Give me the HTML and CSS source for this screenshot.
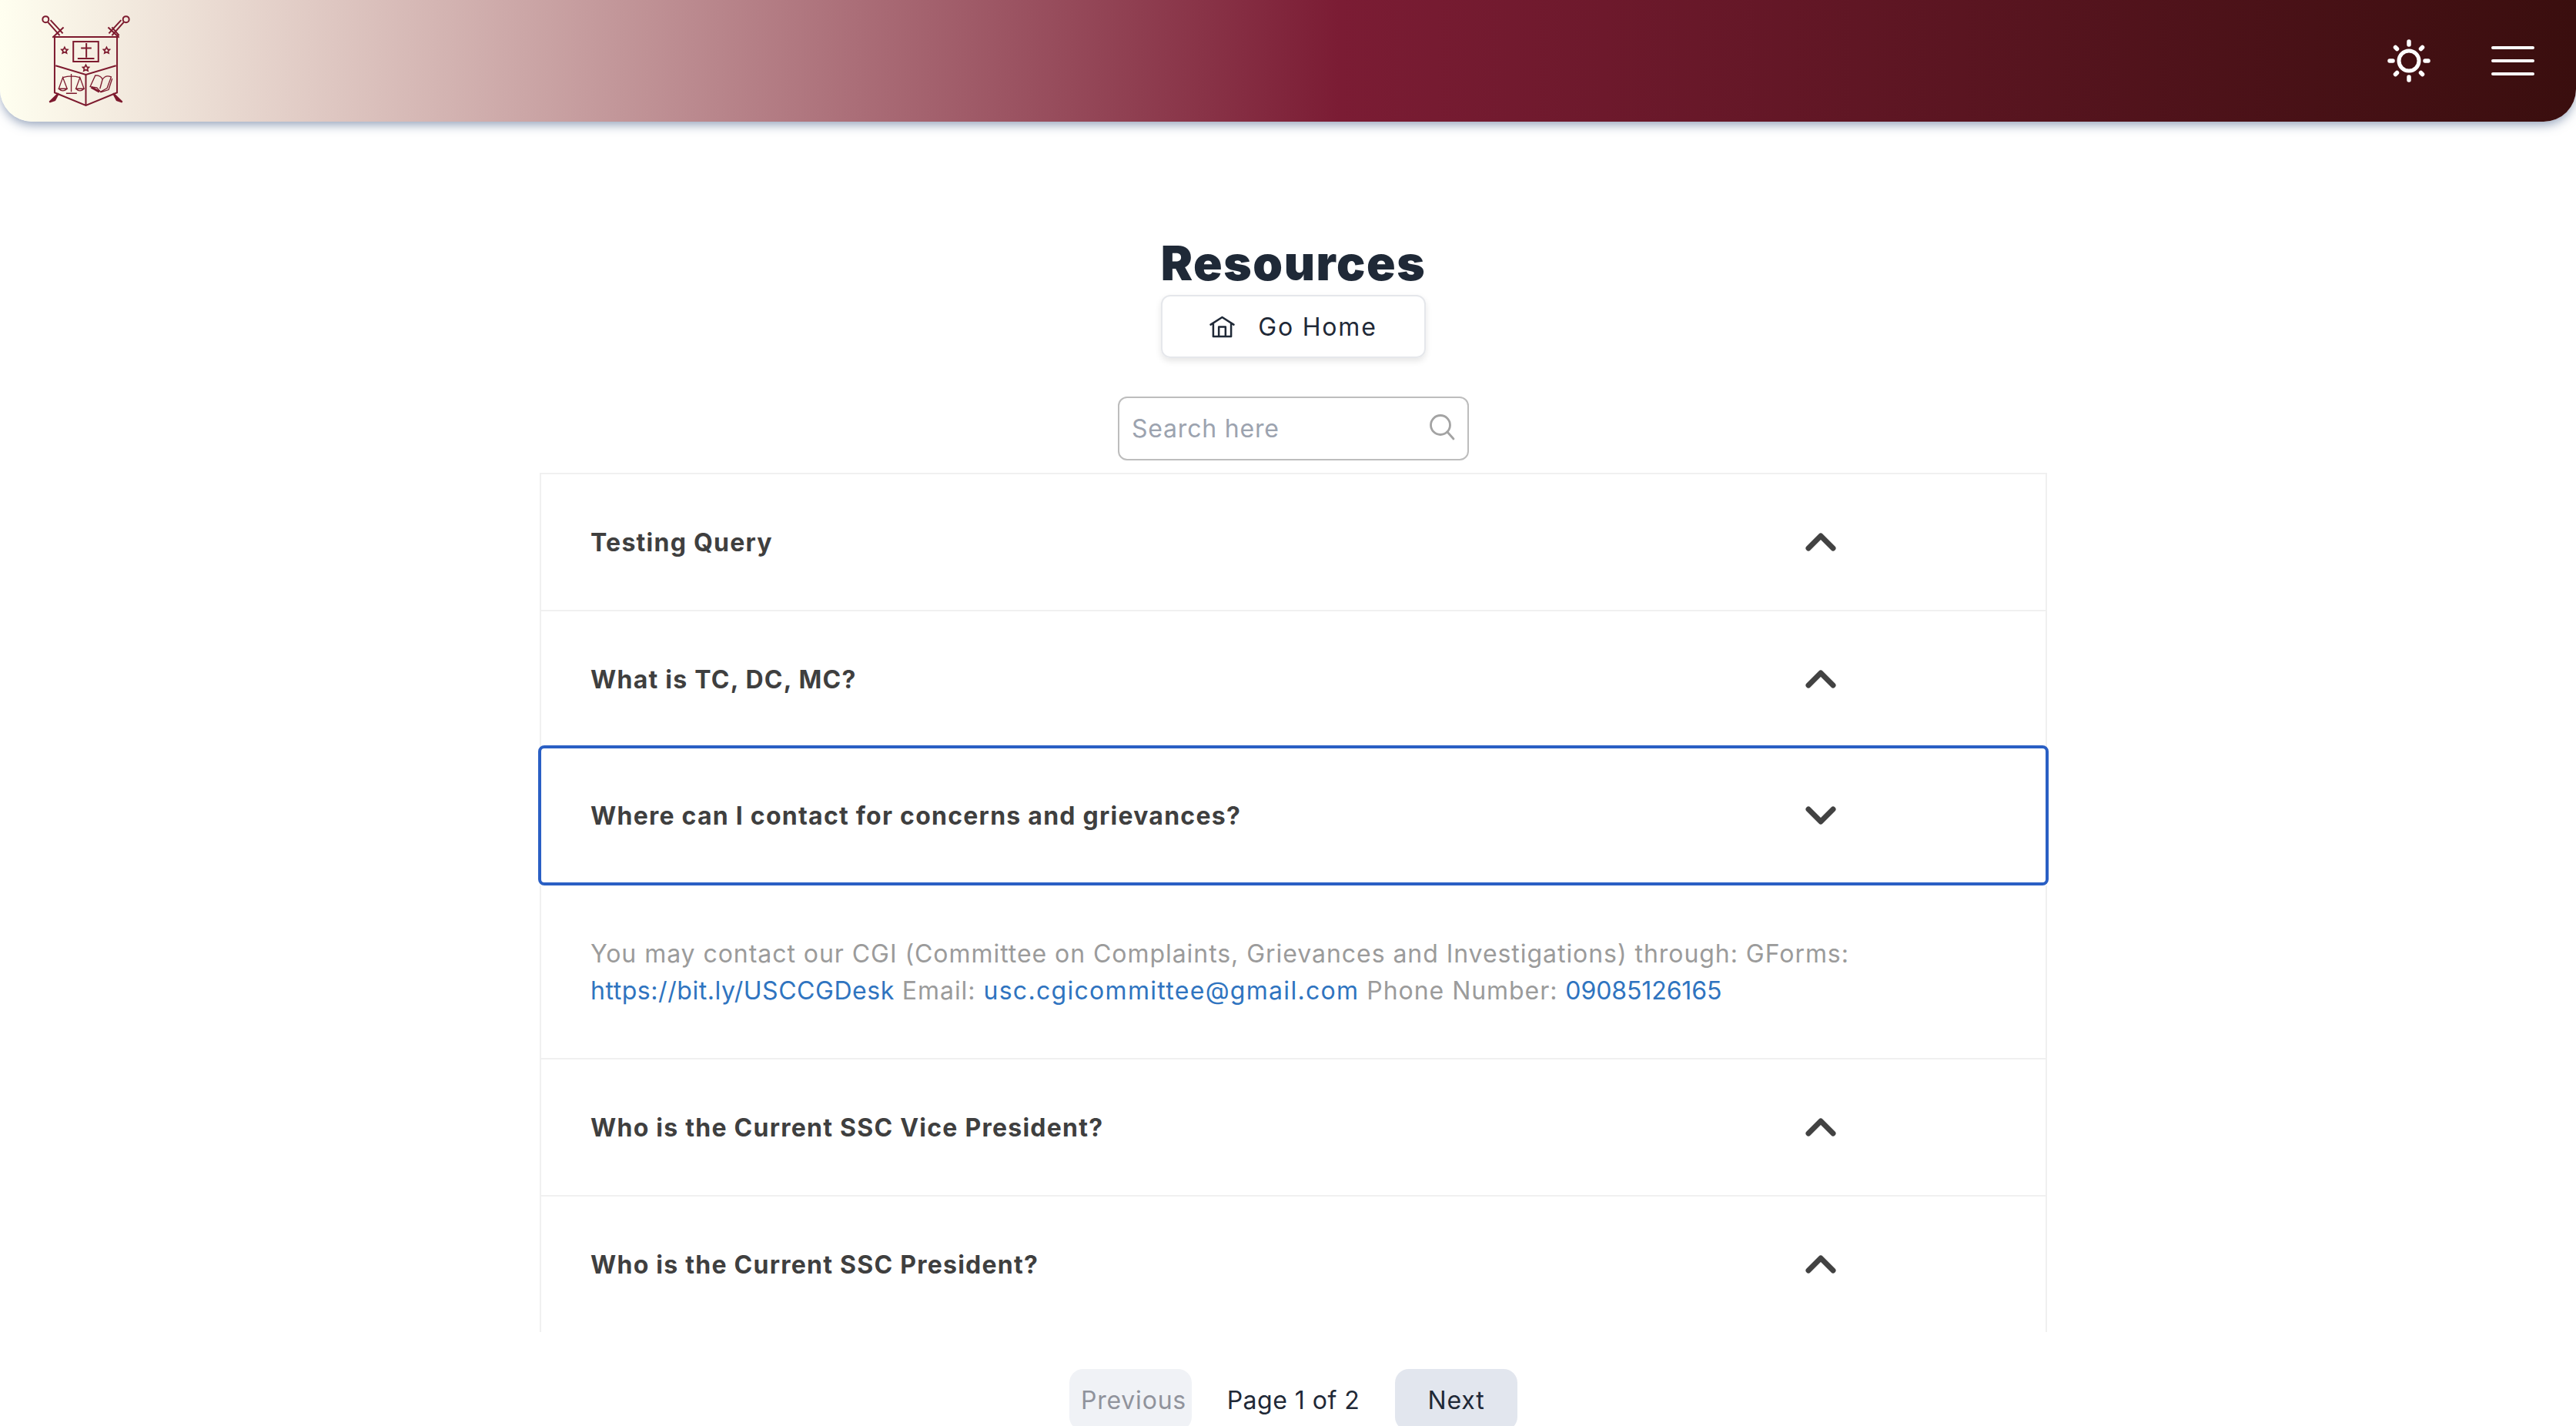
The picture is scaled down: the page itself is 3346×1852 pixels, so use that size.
FILE: index.html
```html
<!DOCTYPE html>
<html lang="en">
<head>
<meta charset="utf-8">
<title>Resources</title>
<link rel="stylesheet" href="styles.css">
</head>
<body>
<header class="topbar">
  <svg class="logo" viewBox="150 45 370 375" fill="none" stroke="#7d1a2e" stroke-width="6">
    <path d="M213 138H457V355L335 405L213 355Z"/>
    <path d="M217 250L335 285L453 250M335 285V405"/>
    <rect x="286" y="156" width="98" height="78"/>
    <path d="M337 162V218M316 181H357M303 222H368"/>
    <circle cx="178" cy="69" r="12"/><circle cx="492" cy="69" r="12"/>
    <path d="M187 80L233 132M197 72L245 124M205 140L248 100M465 132L437 100M483 80L437 132M473 72L425 124M465 140L422 100" stroke-width="6"/>
    <path d="M193 392L228 358L214 385ZM477 392L442 358L456 385Z" fill="#7d1a2e"/>
    <path d="M252 178L256 186L264 187L258 193L260 201L252 197L244 201L246 193L240 187L248 186Z" stroke-width="5"/>
    <path d="M416 178L420 186L428 187L422 193L424 201L416 197L408 201L410 193L404 187L412 186Z" stroke-width="5"/>
    <path d="M335 247L339 255L347 256L341 262L343 270L335 266L327 270L329 262L323 256L331 255Z" stroke-width="5"/>
    <path d="M278 282V352M258 358H300M245 296Q278 286 312 296M245 296L229 340H262ZM312 296L296 340H328ZM229 340Q245 356 262 340M296 340Q312 356 328 340" stroke-width="4"/>
    <path d="M352 332L372 288Q395 288 400 304Q412 284 434 294L418 338L392 352L378 336ZM400 304L390 340M438 300L424 344L392 354" stroke-width="4"/>
    <path d="M356 334L388 352" stroke-width="9"/>
  </svg>
  <div class="topbar-actions">
    <svg class="sun" viewBox="0 0 56 56" fill="none" stroke="#fff" stroke-linecap="round">
      <circle cx="28" cy="28" r="13" stroke-width="5"/>
      <path d="M28 3V7M28 49V53M3 28H7M49 28H53M10.5 10.5L12.5 12.5M43.5 43.5L45.5 45.5M10.5 45.5L12.5 43.5M43.5 12.5L45.5 10.5" stroke-width="5.5"/>
    </svg>
    <svg class="menu" viewBox="0 0 56 38" fill="none" stroke="#fff" stroke-width="4" stroke-linecap="round">
      <path d="M2 2H54M2 19H54M2 36H54"/>
    </svg>
  </div>
</header>
<main class="page">
  <h1 class="title">Resources</h1>
  <a class="home-btn">
    <svg class="home-icon" viewBox="0 0 34 30" fill="none" stroke="#1f2937" stroke-width="2.6" stroke-linejoin="round" stroke-linecap="round">
      <path d="M1.5 12L17 2L32.5 12M5 10V28H29V10M12.5 28V15H21.5V28"/>
    </svg>
    <span>Go Home</span>
  </a>
  <div class="search">
    <span class="search-ph">Search here</span>
    <svg class="search-icon" viewBox="0 0 34 34" fill="none" stroke="#a3a3a3" stroke-width="2.8" stroke-linecap="round">
      <circle cx="15" cy="14" r="12.5"/><path d="M24 23L32 32"/>
    </svg>
  </div>
  <section class="list">
    <div class="row row-first"><span>Testing Query</span><svg class="chev" viewBox="0 0 40 24" fill="none" stroke="#424242" stroke-width="7" stroke-linecap="round" stroke-linejoin="round"><path d="M4 20L20 4L36 20"/></svg></div>
    <div class="row"><span>What is TC, DC, MC?</span><svg class="chev" viewBox="0 0 40 24" fill="none" stroke="#424242" stroke-width="7" stroke-linecap="round" stroke-linejoin="round"><path d="M4 20L20 4L36 20"/></svg></div>
    <div class="row row-open"><span>Where can I contact for concerns and grievances?</span><svg class="chev" viewBox="0 0 40 24" fill="none" stroke="#424242" stroke-width="7" stroke-linecap="round" stroke-linejoin="round"><path d="M4 4L20 20L36 4"/></svg></div>
    <div class="answer">You may contact our CGI (Committee on Complaints, Grievances and Investigations) through: GForms:<br><a class="link link-url">https://bit.ly/USCCGDesk</a> Email: <a class="link link-mail">usc.cgicommittee@gmail.com</a> Phone Number: <a class="link link-tel">09085126165</a></div>
    <div class="row"><span>Who is the Current SSC Vice President?</span><svg class="chev" viewBox="0 0 40 24" fill="none" stroke="#424242" stroke-width="7" stroke-linecap="round" stroke-linejoin="round"><path d="M4 20L20 4L36 20"/></svg></div>
    <div class="row"><span>Who is the Current SSC President?</span><svg class="chev" viewBox="0 0 40 24" fill="none" stroke="#424242" stroke-width="7" stroke-linecap="round" stroke-linejoin="round"><path d="M4 20L20 4L36 20"/></svg></div>
  </section>
  <nav class="pager">
    <div class="pg-btn pg-off">Previous</div>
    <div class="pg-label">Page 1 of 2</div>
    <div class="pg-btn">Next</div>
  </nav>
</main>
</body>
</html>
```

FILE: styles.css
```css
* { box-sizing: border-box; }
html, body { margin: 0; height: 1852px; overflow: hidden; background: #fff; }
body { font-family: Inter, "Noto Sans", sans-serif; color: #1f2937; }
.topbar {
  height: 158px;
  display: flex;
  align-items: center;
  justify-content: space-between;
  padding: 0 54px 0 50px;
  border-radius: 0 0 42px 42px;
  background: linear-gradient(90deg, #fffff0 0%, #7b1c34 52%, #3a0e0e 100%);
  box-shadow: 0 6px 14px -2px rgba(60, 85, 130, .55);
}
.logo { width: 123px; height: 125px; }
.topbar-actions { display: flex; align-items: center; gap: 79px; }
.sun { width: 56px; height: 56px; display: block; }
.menu { width: 56px; height: 38px; display: block; }
.page { display: flex; flex-direction: column; align-items: center; padding-left: 14px; }
.title {
  flex: none;
  margin: 144px 0 0;
  font-size: 62px;
  line-height: 80px;
  font-weight: 900;
  letter-spacing: 1.6px;
  color: #1f2937;
}
.home-btn {
  flex: none;
  width: 344px;
  height: 82px;
  margin-top: 1px;
  display: flex;
  align-items: center;
  justify-content: center;
  gap: 30px;
  border: 2px solid #e5e7eb;
  border-radius: 12px;
  font-size: 32px;
  letter-spacing: 1.8px;
  box-shadow: 0 4px 8px rgba(0, 0, 0, .1);
}
.home-icon { width: 33px; height: 29px; }
.search {
  flex: none;
  width: 456px;
  height: 83px;
  margin-top: 50px;
  padding: 0 16px;
  display: flex;
  align-items: center;
  justify-content: space-between;
  border: 2px solid #bdbdbd;
  border-radius: 12px;
}
.search-ph { font-size: 32px; letter-spacing: .8px; color: #9ca3af; }
.search-icon { width: 34px; height: 34px; margin-top: -4px; }
.list {
  flex: none;
  width: 1962px;
  height: 1116px;
  margin-top: 16px;
  padding: 0 2px;
  overflow: hidden;
}
.row {
  height: 178px;
  display: flex;
  align-items: center;
  justify-content: space-between;
  padding: 0 272px 0 64px;
  border: solid #f0f0f0;
  border-width: 0 2px 2px;
  font-size: 32px;
  font-weight: 700;
  letter-spacing: 1.25px;
  color: #3f3f3f;
}
.row-first { height: 180px; border-top-width: 2px; }
.row-open {
  position: relative;
  height: 182px;
  margin: -4px -2px 0;
  border: 4px solid #2a5fc4;
  border-radius: 8px;
}
.chev { width: 40px; height: 24px; flex: none; }
.answer {
  padding: 65px 64px 0;
  height: 226px;
  border: solid #f0f0f0;
  border-width: 0 2px 2px;
  font-size: 32px;
  line-height: 48px;
  letter-spacing: .95px;
  color: #9b9b9b;
}
.link { color: #2f74c0; }
.link-url { letter-spacing: .55px; }
.link-mail { letter-spacing: 1.3px; }
.link-tel { letter-spacing: -.1px; }
.pager {
  flex: none;
  display: flex;
  justify-content: center;
  align-items: center;
  margin-top: 48px;
  font-size: 32px;
  letter-spacing: .8px;
}
.pg-btn {
  width: 159px;
  height: 80px;
  display: flex;
  align-items: center;
  justify-content: center;
  border-radius: 18px;
  background: #e2e6ee;
  white-space: nowrap;
}
.pg-off { background: #f0f2f6; color: #90939c; padding-left: 8px; }
.pg-label { width: 264px; text-align: center; letter-spacing: .5px; }
```
